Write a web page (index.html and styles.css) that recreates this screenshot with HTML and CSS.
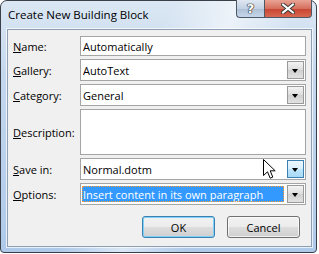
FILE: index.html
```html
<!DOCTYPE html>
<html>
<head>
  <meta charset="UTF-8">
  <title>Create New Building Block</title>
  <link rel="stylesheet" href="styles.css">
</head>
<body>
  <div class="window">
    <div class="titlebar">
      <span class="title">Create New Building Block</span>
      <div class="caption-buttons">
        <span class="cap-btn help">?</span>
        <span class="cap-btn close">
          <svg width="14" height="11" viewBox="0 0 14 11">
            <path d="M2 1.5 L12 9.5 M12 1.5 L2 9.5" stroke="#3a3a3a" stroke-width="4" stroke-linecap="square"/>
            <path d="M2 1.5 L12 9.5 M12 1.5 L2 9.5" stroke="#fff" stroke-width="2" stroke-linecap="square"/>
          </svg>
        </span>
      </div>
    </div>
    <div class="client">
      <div class="form">
        <label><u>N</u>ame:</label>
        <div class="field"><span class="value">Automatically</span></div>

        <label><u>G</u>allery:</label>
        <div class="field"><span class="value">AutoText</span><span class="drop"></span></div>

        <label><u>C</u>ategory:</label>
        <div class="field"><span class="value">General</span><span class="drop"></span></div>

        <label><u>D</u>escription:</label>
        <div class="field"></div>

        <label><u>S</u>ave in:</label>
        <div class="field"><span class="value">Normal.dotm</span><span class="drop hover"></span></div>

        <label><u>O</u>ptions:</label>
        <div class="field"><span class="value selected">Insert content in its own paragraph</span><span class="drop"></span></div>
      </div>
      <div class="buttons">
        <button class="btn default">OK</button>
        <button class="btn">Cancel</button>
      </div>
    </div>
    <svg class="cursor" width="13" height="21" viewBox="0 0 13 21">
      <path d="M0.5 0.5 L0.5 16.5 L4.5 12.8 L7.2 19.2 L9.8 18.1 L7.2 11.8 L12.2 11.8 Z" fill="#fff" stroke="#000" stroke-width="1" stroke-linejoin="round"/>
    </svg>
  </div>
</body>
</html>
```

FILE: styles.css
```css
body {
  margin: 0;
  background: #fff;
  font-family: "Open Sans", "Noto Sans", sans-serif;
  font-size: 11px;
  color: #000;
}
.window {
  position: relative;
  width: 317px;
  height: 253px;
  box-sizing: border-box;
  border: 1px solid #3b4048;
  border-radius: 7px 7px 4px 4px;
  background:
    linear-gradient(115deg, rgba(255,255,255,0) 40%, rgba(255,255,255,0.55) 55%, rgba(255,255,255,0) 70%),
    linear-gradient(to bottom, #dbe7f3, #c4d8ee 30%, #aec9e9);
  padding: 0 4px 5px 6px;
  display: flex;
  flex-direction: column;
}
.titlebar {
  height: 28px;
  display: flex;
  justify-content: space-between;
  align-items: flex-start;
}
.title {
  margin-top: 6px;
  margin-left: 1px;
  font-size: 11.5px;
  color: #000;
}
.caption-buttons {
  display: flex;
  margin-top: -1px;
}
.cap-btn {
  height: 18px;
  display: flex;
  align-items: center;
  justify-content: center;
  box-sizing: border-box;
  border: 1px solid #4d5866;
  border-top: none;
}
.help {
  width: 28px;
  border-radius: 0 0 0 4px;
  border-right: none;
  background: linear-gradient(to bottom, #dfe7f1, #c3d1e2 50%, #aebfd5 51%, #c6d6ea);
  color: #fff;
  font-family: "DejaVu Sans", sans-serif;
  font-weight: bold;
  font-size: 13px;
  line-height: 1;
  text-shadow: 0 0 1px #333, 0 0 1px #333, 0 0 1px #333, 0 0 1px #333;
}
.close {
  width: 48px;
  border-radius: 0 0 4px 0;
  background: linear-gradient(to bottom, #e8a395, #d6705e 50%, #c74432 51%, #d9674f);
}
.client {
  flex: 1;
  background: #f0f0f0;
  border: 1px solid #8e9fb3;
  box-shadow: 0 0 0 1px rgba(255,255,255,0.7);
  padding: 6px 5px 0 5px;
}
.form {
  display: grid;
  grid-template-columns: 67px 226px;
  grid-template-rows: 20px 22px 22px 46px 22px 22px;
  row-gap: 3px;
}
.form label {
  align-self: center;
}
.field {
  display: flex;
  align-items: stretch;
  background: #fff;
  border: 1px solid #a5a5a5;
  box-sizing: border-box;
}
.value {
  flex: 1;
  display: flex;
  align-items: center;
  padding-left: 2px;
}
.value.selected {
  margin: 2px 2px 2px 1px;
  padding-left: 1px;
  background: #3399ff;
  color: #fff;
  outline: 1px dotted #ff9a33;
  outline-offset: -1px;
}
.drop {
  width: 17px;
  margin: 1px;
  box-sizing: border-box;
  border: 1px solid #9a9a9a;
  background: linear-gradient(to bottom, #f4f4f4, #dcdcdc 50%, #cfcfcf 51%, #e2e2e2);
  position: relative;
}
.drop::after {
  content: "";
  position: absolute;
  left: 4px;
  top: 7px;
  border-left: 3.5px solid transparent;
  border-right: 3.5px solid transparent;
  border-top: 4px solid #000;
}
.drop.hover {
  border-color: #3c7fb1;
  background: linear-gradient(to bottom, #eaf6fd, #d9f0fc 50%, #bee6fd 51%, #a7d9f5);
}
.buttons {
  display: flex;
  justify-content: flex-end;
  gap: 12px;
  margin-top: 11px;
  padding-right: 6px;
}
.btn {
  width: 73px;
  height: 22px;
  font-family: inherit;
  font-size: 11px;
  color: #000;
  border: 1px solid #707070;
  border-radius: 3px;
  background: linear-gradient(to bottom, #f2f2f2, #ebebeb 50%, #dddddd 51%, #cfcfcf);
  box-shadow: inset 0 0 0 1px rgba(255,255,255,0.7);
  padding: 0;
}
.btn.default {
  border-color: #3c7fb1;
  box-shadow: inset 0 0 0 1px #7fd2f5;
}
.cursor {
  position: absolute;
  left: 262px;
  top: 158px;
}
```
